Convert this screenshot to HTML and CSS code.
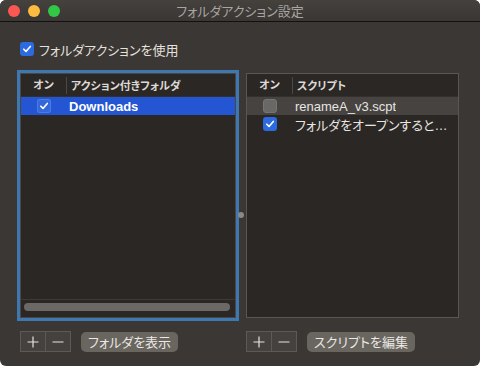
FILE: index.html
```html
<!DOCTYPE html>
<html lang="ja">
<head>
    <meta charset="UTF-8">
    <title>フォルダアクション設定</title>
    <link rel="stylesheet" href="styles.css">
</head>

<body>
    <div class="window">
        <!-- タイトルバー -->
        <div class="titlebar">
            <div class="lights">
                <span class="light red"></span>
                <span class="light yellow"></span>
                <span class="light green"></span>
            </div>
            <div class="title">フォルダアクション設定</div>
            <div></div>
        </div>

        <div class="content">
            <label class="enable">
                <span class="check on">
                    <svg width="10" height="10" viewBox="0 0 10 10"><path d="M1.8 5.2 L4 7.4 L8.3 2.4" fill="none" stroke="#fff" stroke-width="1.6" stroke-linecap="round" stroke-linejoin="round"/></svg>
                </span>
                フォルダアクションを使用
            </label>

            <div class="panes">
                <!-- フォルダ一覧 -->
                <div class="pane-wrap">
                    <div class="table focused">
                        <div class="thead">
                            <div class="col-on">オン</div>
                            <div class="col-name">アクション付きフォルダ</div>
                        </div>
                        <div class="tbody">
                            <div class="row selected">
                                <div class="col-on">
                                    <span class="check on dim">
                                        <svg width="10" height="10" viewBox="0 0 10 10"><path d="M1.8 5.2 L4 7.4 L8.3 2.4" fill="none" stroke="#fff" stroke-width="1.6" stroke-linecap="round" stroke-linejoin="round"/></svg>
                                    </span>
                                </div>
                                <div class="col-name bold">Downloads</div>
                            </div>
                        </div>
                        <div class="hscroll"><div class="thumb"></div></div>
                    </div>
                    <span class="splitter"></span>
                </div>

                <!-- スクリプト一覧 -->
                <div class="table">
                    <div class="thead">
                        <div class="col-on">オン</div>
                        <div class="col-name">スクリプト</div>
                    </div>
                    <div class="tbody">
                        <div class="row inactive">
                            <div class="col-on"><span class="check off"></span></div>
                            <div class="col-name">renameA_v3.scpt</div>
                        </div>
                        <div class="row">
                            <div class="col-on">
                                <span class="check on">
                                    <svg width="10" height="10" viewBox="0 0 10 10"><path d="M1.8 5.2 L4 7.4 L8.3 2.4" fill="none" stroke="#fff" stroke-width="1.6" stroke-linecap="round" stroke-linejoin="round"/></svg>
                                </span>
                            </div>
                            <div class="col-name">フォルダをオープンすると…</div>
                        </div>
                    </div>
                </div>

                <!-- ボタン -->
                <div class="toolbar">
                    <div class="segment">
                        <span><svg width="12" height="12" viewBox="0 0 12 12"><path d="M6 0.5 V11.5 M0.5 6 H11.5" stroke="#e6e3e0" stroke-width="1.2"/></svg></span>
                        <span><svg width="12" height="12" viewBox="0 0 12 12"><path d="M0.5 6 H11.5" stroke="#e6e3e0" stroke-width="1.2"/></svg></span>
                    </div>
                    <button>フォルダを表示</button>
                </div>
                <div class="toolbar">
                    <div class="segment">
                        <span><svg width="12" height="12" viewBox="0 0 12 12"><path d="M6 0.5 V11.5 M0.5 6 H11.5" stroke="#e6e3e0" stroke-width="1.2"/></svg></span>
                        <span><svg width="12" height="12" viewBox="0 0 12 12"><path d="M0.5 6 H11.5" stroke="#e6e3e0" stroke-width="1.2"/></svg></span>
                    </div>
                    <button>スクリプトを編集</button>
                </div>
            </div>
        </div>
    </div>
</body>
</html>
```

FILE: styles.css
```css
body {
    margin: 0;
    background: #fff;
    font-family: "Liberation Sans", "Noto Sans CJK JP", sans-serif;
    font-feature-settings: "palt";
}
.window {
    width: 480px;
    height: 366px;
    background: #3b3734;
    border-radius: 6px;
    overflow: hidden;
    color: #e4e1de;
}
.titlebar {
    height: 21px;
    border-bottom: 1px solid #111;
    background: linear-gradient(#45413d, #3a3633);
    display: grid;
    grid-template-columns: 1fr auto 1fr;
    align-items: center;
}
.lights {
    display: flex;
    gap: 8px;
    padding-left: 8px;
}
.light {
    width: 12px;
    height: 12px;
    border-radius: 50%;
}
.red { background: #fc5753; }
.yellow { background: #fdbc40; }
.green { background: #33c748; }
.title {
    font-size: 13px;
    color: #a8a5a2;
}
.content {
    padding: 19px 0 0 20px;
}
.enable {
    display: flex;
    align-items: center;
    gap: 5px;
    font-size: 13px;
    height: 16px;
}
.check {
    width: 14px;
    height: 14px;
    border-radius: 3px;
    box-sizing: border-box;
    display: inline-flex;
    align-items: center;
    justify-content: center;
}
.check.on {
    background: #2c6ae0;
}
.check.dim {
    background: #3467d8;
    box-shadow: inset 0 0 0 1px #4a7ce4;
}
.check.off {
    background: #6a6866;
    border: 1px solid #777573;
}
.panes {
    margin-top: 16px;
    display: grid;
    grid-template-columns: 216px 213px;
    grid-template-rows: 245px auto;
    column-gap: 10px;
    row-gap: 13px;
}
.pane-wrap {
    position: relative;
    display: flex;
}
.table {
    flex: 1;
    background: #2b2724;
    border: 1px solid #5a5653;
    display: flex;
    flex-direction: column;
}
.table.focused {
    border-color: #4a4643;
    box-shadow: 0 0 0 3px #3f78b0;
}
.thead {
    display: flex;
    height: 22px;
    align-items: center;
    font-size: 11px;
    font-weight: bold;
    color: #dcd9d6;
    border-bottom: 1px solid #34302d;
}
.thead .col-on {
    border-right: 1px solid #4c4845;
    height: 17px;
    line-height: 17px;
}
.tbody {
    flex: 1;
}
.col-on {
    width: 45px;
    flex: none;
    display: flex;
    justify-content: center;
    align-items: center;
}
.col-name {
    padding-left: 4px;
    white-space: nowrap;
    overflow: hidden;
}
.row {
    display: flex;
    height: 18px;
    align-items: center;
    font-size: 13px;
    color: #e8e5e2;
}
.row .col-name {
    padding-left: 3px;
}
.row.selected {
    background: #2455d2;
    color: #fff;
}
.row.inactive {
    background: #464341;
}
.bold {
    font-weight: bold;
}
.hscroll {
    height: 14px;
    border-top: 1px solid #3e3a37;
    padding: 3px 5px 0 3px;
}
.thumb {
    height: 8px;
    border-radius: 4px;
    background: #6b6865;
}
.splitter {
    position: absolute;
    right: -8px;
    top: 139px;
    width: 6px;
    height: 6px;
    border-radius: 50%;
    background: #8b8885;
}
.toolbar {
    display: flex;
    align-items: center;
    gap: 10px;
}
.segment {
    display: flex;
    border: 1px solid #5d5956;
    background: #45413e;
}
.segment span {
    width: 24px;
    height: 19px;
    display: flex;
    align-items: center;
    justify-content: center;
}
.segment span + span {
    border-left: 1px solid #5d5956;
}
button {
    height: 20px;
    padding: 0 7px;
    border: none;
    border-radius: 5px;
    background: #69655f;
    color: #ebe8e5;
    font-family: "Noto Sans CJK JP", sans-serif;
    font-feature-settings: "palt";
    font-size: 13px;
}
```
